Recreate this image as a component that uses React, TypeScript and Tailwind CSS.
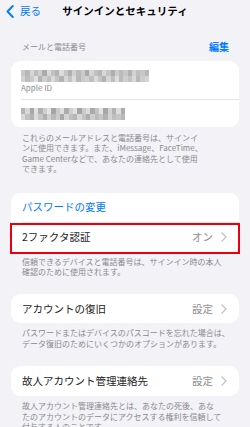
import React from "react";

const font = {
  fontFamily: '"Noto Sans CJK JP", "Noto Sans", sans-serif',
};

// pixelated (mosaic) blur cells for the hidden email / phone
const mosaicA = [
  "bg-[#c9c9c9]", "bg-[#b8b8b8]", "bg-[#d6d6d6]", "bg-[#bdbdbd]", "bg-[#cfcfcf]",
  "bg-[#ababab]", "bg-[#d9d9d9]", "bg-[#c2c2c2]", "bg-[#b4b4b4]", "bg-[#dcdcdc]",
  "bg-[#c6c6c6]", "bg-[#b0b0b0]", "bg-[#d0d0d0]", "bg-[#bababa]", "bg-[#cbcbcb]",
  "bg-[#a9a9a9]", "bg-[#d4d4d4]", "bg-[#c0c0c0]", "bg-[#b6b6b6]", "bg-[#d8d8d8]",
  "bg-[#c4c4c4]", "bg-[#aeaeae]", "bg-[#cdcdcd]", "bg-[#bcbcbc]", "bg-[#c8c8c8]",
  "bg-[#b2b2b2]", "bg-[#d2d2d2]", "bg-[#bfbfbf]", "bg-[#c7c7c7]", "bg-[#b9b9b9]",
];
const mosaicB = [
  "bg-[#d3d3d3]", "bg-[#bdbdbd]", "bg-[#cacaca]", "bg-[#e0e0e0]", "bg-[#b5b5b5]",
  "bg-[#cecece]", "bg-[#c1c1c1]", "bg-[#dadada]", "bg-[#c5c5c5]", "bg-[#b3b3b3]",
  "bg-[#d7d7d7]", "bg-[#c3c3c3]", "bg-[#dddddd]", "bg-[#b7b7b7]", "bg-[#cccccc]",
  "bg-[#d1d1d1]", "bg-[#bebebe]", "bg-[#dbdbdb]", "bg-[#c6c6c6]", "bg-[#b1b1b1]",
  "bg-[#d5d5d5]", "bg-[#c0c0c0]", "bg-[#dedede]", "bg-[#bbbbbb]", "bg-[#cfcfcf]",
  "bg-[#c2c2c2]", "bg-[#d9d9d9]", "bg-[#b8b8b8]", "bg-[#cdcdcd]", "bg-[#d6d6d6]",
];
const mosaicC = [
  "bg-[#b5b5b5]", "bg-[#d8d8d8]", "bg-[#a8a8a8]", "bg-[#e2e2e2]", "bg-[#b0b0b0]",
  "bg-[#cfcfcf]", "bg-[#e4e4e4]", "bg-[#a6a6a6]", "bg-[#c9c9c9]", "bg-[#dfdfdf]",
  "bg-[#acacac]", "bg-[#d0d0d0]", "bg-[#e1e1e1]", "bg-[#a4a4a4]", "bg-[#cbcbcb]",
  "bg-[#dcdcdc]", "bg-[#aaaaaa]", "bg-[#c4c4c4]", "bg-[#e3e3e3]", "bg-[#a7a7a7]",
  "bg-[#d2d2d2]", "bg-[#b2b2b2]", "bg-[#dedede]", "bg-[#adadad]",
];

function Mosaic({ cells, rows, w }: { cells: string[]; rows: number; w: string }) {
  const perRow = Math.ceil(cells.length / rows);
  return (
    <div className={`flex flex-col ${w}`}>
      {Array.from({ length: rows }).map((_, r) => (
        <div key={r} className="flex h-[6px]">
          {cells.slice(r * perRow, (r + 1) * perRow).map((c, i) => (
            <div key={i} className={`h-full flex-1 ${c}`} />
          ))}
        </div>
      ))}
    </div>
  );
}

function Chevron() {
  return (
    <svg width="6" height="10" viewBox="0 0 6 10" className="shrink-0">
      <path
        d="M1 1l4 4-4 4"
        fill="none"
        stroke="#c4c4c7"
        strokeWidth="1.3"
        strokeLinecap="round"
        strokeLinejoin="round"
      />
    </svg>
  );
}

function Footer({ lines, className = "" }: { lines: string[]; className?: string }) {
  return (
    <div className={`px-[22px] text-[8px] leading-[10.4px] text-[#8a8a8e] ${className}`}>
      {lines.map((l) => (
        <div key={l} className="whitespace-nowrap">
          {l}
        </div>
      ))}
    </div>
  );
}

function Row({ label, value, h }: { label: string; value: string; h: string }) {
  return (
    <div className={`flex items-center justify-between pl-[11px] pr-[12px] ${h}`}>
      <span className="text-[10.5px] text-[#1c1c1e]">{label}</span>
      <div className="flex items-center gap-[8px]">
        <span className="text-[10.5px] text-[#8e8e93]">{value}</span>
        <Chevron />
      </div>
    </div>
  );
}

export default function App() {
  return (
    <div className="h-[427px] w-[250px] overflow-hidden bg-[#f2f2f7]" style={font}>
      {/* Nav bar */}
      <div className="grid h-[22px] grid-cols-[1fr_auto_1fr] items-center">
        <div className="flex items-center gap-[6px] pl-[6px] text-[#007aff]">
          <svg width="8" height="13" viewBox="0 0 8 13">
            <path
              d="M6.8 1L1.5 6.5l5.3 5.5"
              fill="none"
              stroke="#007aff"
              strokeWidth="1.9"
              strokeLinecap="round"
              strokeLinejoin="round"
            />
          </svg>
          <span className="text-[10.5px]">戻る</span>
        </div>
        <div className="text-[10.5px] font-bold text-black">サインインとセキュリティ</div>
        <div />
      </div>

      {/* Section header */}
      <div className="mt-[19px] flex items-center justify-between pl-[22px] pr-[21px]">
        <span className="text-[8px] leading-[12px] text-[#8a8a8e]">メールと電話番号</span>
        <span className="text-[10px] font-bold leading-[12px] text-[#007aff]">編集</span>
      </div>

      {/* Card 1 */}
      <div className="mx-[11px] mt-[8px] overflow-hidden rounded-[9px] bg-white">
        <div className="h-[38px] pl-[10px] pt-[9px]">
          <Mosaic cells={[...mosaicA.slice(0, 30), ...mosaicB.slice(0, 30)]} rows={2} w="w-[128px]" />
          <div className="mt-[1px] text-[8px] leading-[10px] text-[#8a8a8e]">Apple ID</div>
        </div>
        <div className="ml-[10px] h-px bg-[#e5e5ea]" />
        <div className="flex h-[27px] items-center pl-[10px]">
          <Mosaic cells={[...mosaicC, ...mosaicA.slice(6, 30)]} rows={2} w="w-[104px]" />
        </div>
      </div>

      <Footer
        className="mt-[6px]"
        lines={[
          "これらのメールアドレスと電話番号は、サインイ",
          "ンに使用できます。また、iMessage、FaceTime、",
          "Game Centerなどで、あなたの連絡先として使用",
          "できます。",
        ]}
      />

      {/* Card 2 */}
      <div className="mx-[11px] mt-[18px] rounded-[9px] bg-white">
        <div className="flex h-[29px] items-center pl-[11px]">
          <span className="text-[10.5px] text-[#007aff]">パスワードの変更</span>
        </div>
        <div className="relative">
          <div className="absolute left-[11px] right-0 top-0 h-px bg-[#e5e5ea]" />
          <Row label="2ファクタ認証" value="オン" h="h-[31px]" />
          <div className="pointer-events-none absolute -left-[1px] -right-[1px] top-[1px] -bottom-[1px] border-2 border-[#e60012]" />
        </div>
      </div>

      <Footer
        className="mt-[4px]"
        lines={["信頼できるデバイスと電話番号は、サインイン時の本人", "確認のために使用されます。"]}
      />

      {/* Card 3 */}
      <div className="mx-[11px] mt-[17px] rounded-[9px] bg-white">
        <Row label="アカウントの復旧" value="設定" h="h-[29px]" />
      </div>

      <Footer
        className="mt-[5px]"
        lines={[
          "パスワードまたはデバイスのパスコードを忘れた場合は、",
          "データ復旧のためにいくつかのオプションがあります。",
        ]}
      />

      {/* Card 4 */}
      <div className="mx-[11px] mt-[17px] rounded-[9px] bg-white">
        <Row label="故人アカウント管理連絡先" value="設定" h="h-[30px]" />
      </div>

      <Footer
        className="mt-[5px]"
        lines={[
          "故人アカウント管理連絡先とは、あなたの死後、あな",
          "たのアカウントのデータにアクセスする権利を信頼して",
          "付与する人のことです。",
        ]}
      />
    </div>
  );
}
